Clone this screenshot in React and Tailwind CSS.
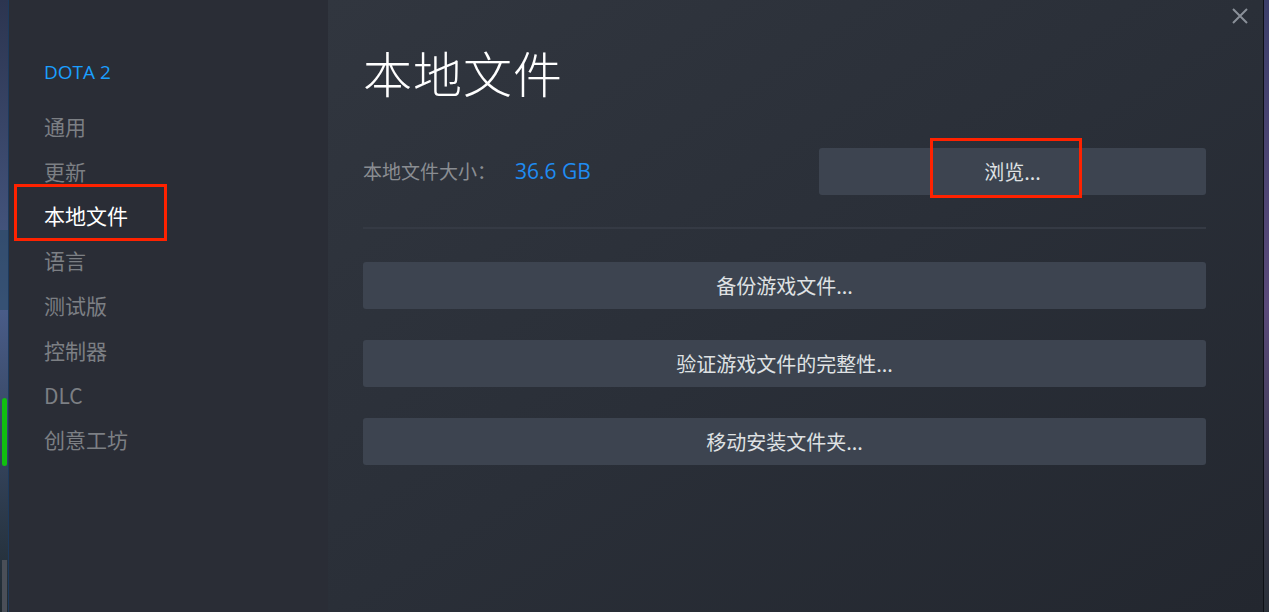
import React from 'react';

const cjk = { fontFamily: '"Noto Sans CJK SC", "Noto Sans", sans-serif' };

const navItems = ['通用', '更新', '本地文件', '语言', '测试版', '控制器', 'DLC', '创意工坊'];

export default function App() {
  return (
    <div className="flex w-[1269px] h-[612px] overflow-hidden bg-[#1b1e24]" style={cjk}>
      {/* Background peeking on left edge */}
      <div className="relative w-[8px] h-full bg-gradient-to-b from-[#2c3550] via-[#4a5d8a] to-[#1f2a30]">
        <div className="absolute left-0 top-[230px] w-full h-[80px] bg-[#2a4a66]/60" />
        <div className="absolute left-[2px] top-[398px] w-[5px] h-[68px] rounded-sm bg-[#10c010]" />
        <div className="absolute left-[2px] top-[560px] w-[5px] h-[52px] bg-[#4a4f58]" />
      </div>

      {/* Dialog */}
      <div className="flex flex-1 h-full border-l border-[#1d3a5c]">
        {/* Sidebar */}
        <div className="w-[319px] h-full bg-[#2a2d36] pt-[58px] flex flex-col">
          <div className="pl-[35px] text-[19px] leading-[28px] text-[#1a9fff]" style={{ fontFamily: '"Open Sans", "Noto Sans", sans-serif' }}>
            DOTA 2
          </div>
          <div className="mt-[18px] flex flex-col">
            {navItems.map((item) => {
              const active = item === '本地文件';
              return (
                <div key={item} className="relative h-[44.8px] flex items-center pl-[35px]">
                  {active && (
                    <div className="absolute left-[5px] top-[-10px] w-[153px] h-[57px] border-[3px] border-[#ff2200]" />
                  )}
                  <span className={`text-[21px] leading-none ${active ? 'text-white' : 'text-[#7c7f84]'}`}>{item}</span>
                </div>
              );
            })}
          </div>
        </div>

        {/* Main */}
        <div className="relative flex-1 h-full bg-gradient-to-br from-[#31363f] via-[#2a2f38] to-[#23272f] pl-[35px] pr-[57px] pt-[43px]">
          <button className="absolute right-[14px] top-[7px] text-[#8a9099]">
            <svg width="18" height="18" viewBox="0 0 18 18" fill="none" stroke="currentColor" strokeWidth="2">
              <path d="M2 2 L16 16 M16 2 L2 16" />
            </svg>
          </button>

          <h1 className="text-[49px] leading-[58px] text-white font-light tracking-[1px]">本地文件</h1>

          <div className="mt-[47px] flex items-center h-[47px]">
            <span className="text-[19px] text-[#8a8d92]">本地文件大小：</span>
            <span className="ml-[19px] text-[21px] text-[#1f8cf2]" style={{ fontFamily: '"Open Sans", "Noto Sans", sans-serif' }}>36.6 GB</span>
            <div className="ml-auto relative w-[387px] h-[47px] rounded-[3px] bg-[#3d4450] flex items-center justify-center text-[20px] text-[#dfe1e3]">
              浏览...
              <div className="absolute left-[111px] top-[-10px] w-[152px] h-[60px] border-[3px] border-[#ff2200]" />
            </div>
          </div>

          <div className="mt-[32px] h-[2px] bg-[#353a44]" />

          <div className="mt-[33px] flex flex-col gap-[31px]">
            {['备份游戏文件...', '验证游戏文件的完整性...', '移动安装文件夹...'].map((label) => (
              <button key={label} className="w-full h-[47px] rounded-[3px] bg-[#3d4450] text-[20px] text-[#dfe1e3]">
                {label}
              </button>
            ))}
          </div>
        </div>
      </div>

      {/* Background peeking on right edge */}
      <div className="w-[6px] h-full border-l border-[#0e1116] bg-gradient-to-b from-[#3c3f6a] via-[#5a4a7a] to-[#2a3038]" />
    </div>
  );
}
